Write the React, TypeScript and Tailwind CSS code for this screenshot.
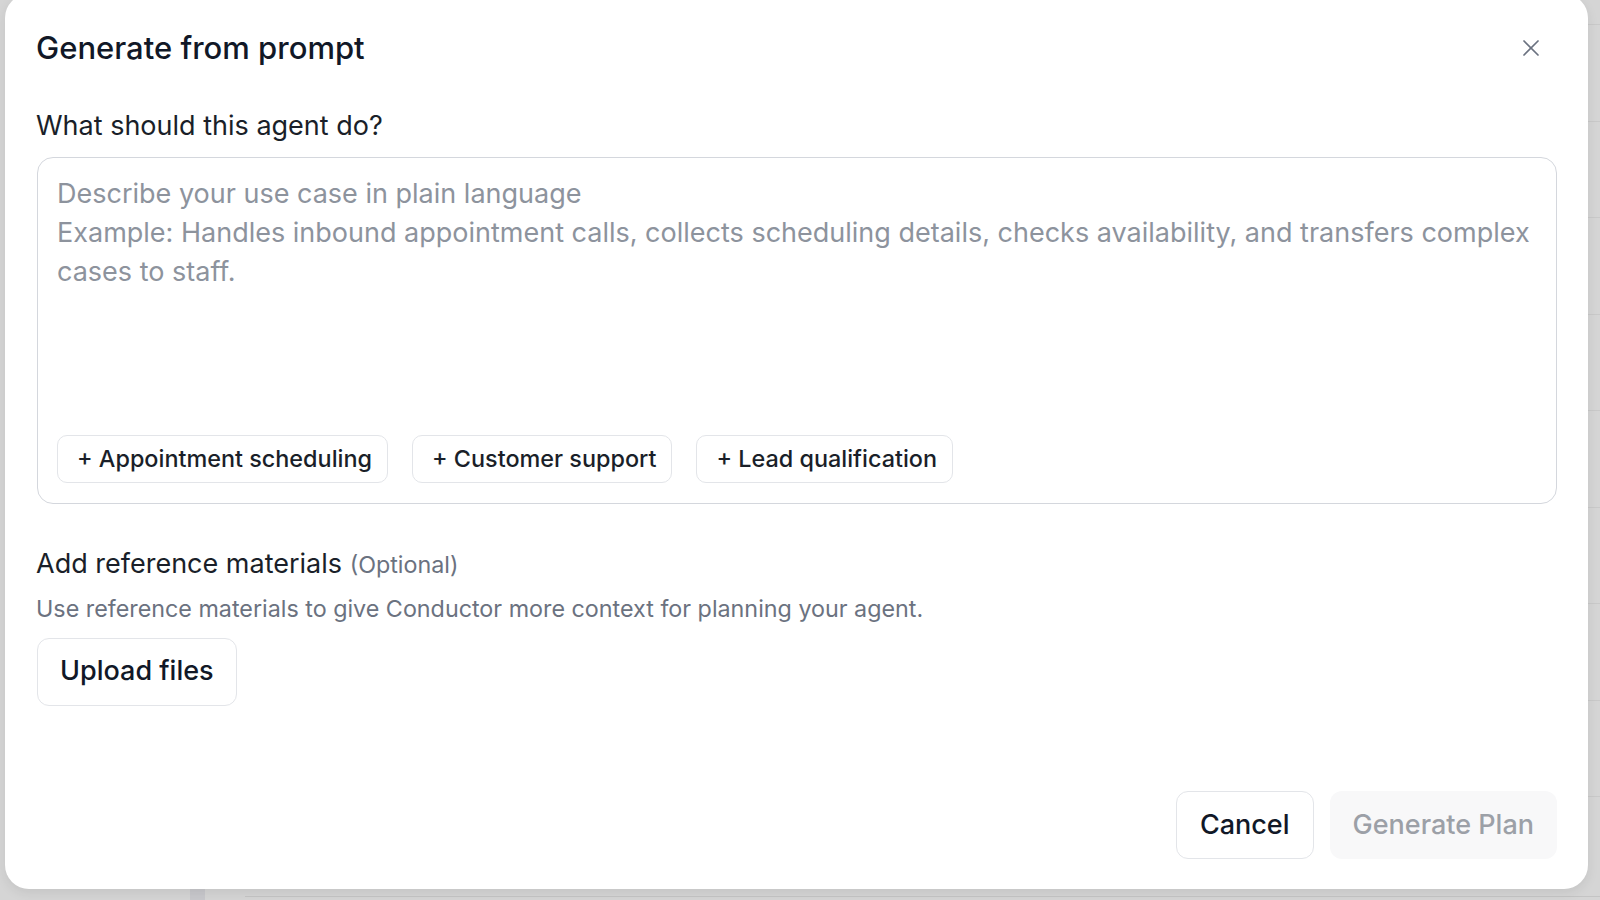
import React, { useState } from 'react';
import { X } from 'lucide-react';

const templates = ['Appointment scheduling', 'Customer support', 'Lead qualification'];

const placeholder =
  'Describe your use case in plain language\nExample: Handles inbound appointment calls, collects scheduling details, checks availability, and transfers complex cases to staff.';

const App: React.FC = () => {
  const [prompt, setPrompt] = useState('');

  return (
    <div
      className="relative h-[900px] w-[1600px] overflow-hidden bg-[#d5d5d5]"
      style={{ fontFamily: 'Inter, "Noto Sans", sans-serif' }}
    >
      {/* page behind the overlay, only its right edge shows */}
      <div className="ml-[1400px] flex flex-col pt-[24px]">
        {Array.from({ length: 9 }).map((_, i) => (
          <div key={i} className="h-[96.5px] border-t border-[#c9c9c9]" />
        ))}
      </div>
      <div className="absolute left-[190px] top-[889px] h-[11px] w-[15px] bg-[#c8c8cc]" />
      <div className="absolute left-[245px] top-[896px] h-px w-[1355px] bg-[#c4c4c4]" />

      {/* dialog */}
      <div className="absolute left-[5px] top-[-6px] flex h-[895px] w-[1583px] flex-col rounded-[24px] bg-white pt-[32px] pr-[31px] pb-[30px] pl-[32px] shadow-[0_4px_12px_rgba(0,0,0,0.08)]">
        <div className="flex h-[44px] items-center justify-between">
          <h2 className="-ml-px text-[31px] font-medium leading-[44px] text-[#111827]">Generate from prompt</h2>
          <button className="mr-[1px] flex h-[44px] w-[50px] items-center justify-center text-[#6b7280]">
            <X size={28} strokeWidth={1.5} />
          </button>
        </div>

        <label className="-ml-px mt-[36px] text-[27px] leading-[39px] text-[#1a1f29]">What should this agent do?</label>

        <div className="mt-[12px] flex h-[347px] flex-col rounded-[16px] border border-[#d4d7dd]">
          <textarea
            value={prompt}
            onChange={(e) => setPrompt(e.target.value)}
            placeholder={placeholder}
            className="flex-1 resize-none bg-transparent pt-[16px] pr-[8px] pl-[19px] text-[27px] leading-[39px] text-[#111827] outline-none placeholder:text-[#8d939d]"
          />
          <div className="flex gap-[24px] px-[19px] pb-[20px]">
            {templates.map((t) => (
              <button
                key={t}
                onClick={() => setPrompt(t)}
                className="flex h-[48px] items-center rounded-[10px] border border-[#e3e5e9] pr-[15px] pl-[19px] text-[23.4px] font-medium text-[#1a1f29]"
              >
                + {t}
              </button>
            ))}
          </div>
        </div>

        <div className="-ml-px mt-[40px] text-[27px] leading-[39px] text-[#1a1f29]">
          Add reference materials <span className="text-[23.3px] text-[#6b7280]">(Optional)</span>
        </div>
        <p className="-ml-px mt-[9px] text-[23.3px] leading-[32.5px] text-[#6b7280]">
          Use reference materials to give Conductor more context for planning your agent.
        </p>
        <div className="mt-[12px]">
          <button className="h-[68px] rounded-[12px] border border-[#e3e5e9] px-[22px] text-[27px] font-medium text-[#111827]">
            Upload files
          </button>
        </div>

        <div className="mt-auto flex justify-end gap-[16px]">
          <button className="h-[68px] rounded-[12px] border border-[#e3e5e9] px-[23px] text-[27px] font-medium text-[#111827]">
            Cancel
          </button>
          <button disabled className="h-[68px] rounded-[12px] bg-[#f8f8f9] px-[23px] text-[27px] font-medium text-[#9ca0a7]">
            Generate Plan
          </button>
        </div>
      </div>
    </div>
  );
};

export default App;
